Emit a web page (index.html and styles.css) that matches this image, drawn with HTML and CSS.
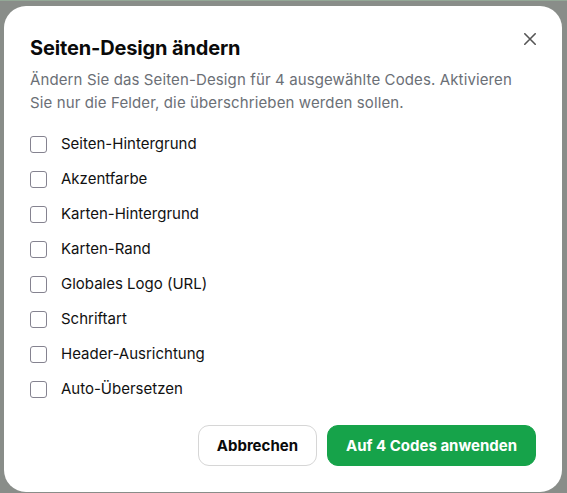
FILE: index.html
```html
<!DOCTYPE html>
<html lang="de">
<head>
<meta charset="utf-8">
<title>Seiten-Design ändern</title>
<link rel="stylesheet" href="styles.css">
</head>
<body>
<div class="backdrop">
  <div class="modal">
    <div class="modal-head">
      <h2 class="title">Seiten-Design ändern</h2>
      <button class="close" aria-label="Schließen">
        <svg width="12" height="12" viewBox="0 0 12 12"><path d="M0.8 0.8L11.2 11.2M11.2 0.8L0.8 11.2" stroke="#555" stroke-width="1.6" stroke-linecap="round"/></svg>
      </button>
    </div>
    <p class="desc">Ändern Sie das Seiten-Design für 4 ausgewählte Codes. Aktivieren Sie nur die Felder, die überschrieben werden sollen.</p>
    <ul class="fields">
      <li><label class="field"><span class="box"></span>Seiten-Hintergrund</label></li>
      <li><label class="field"><span class="box"></span>Akzentfarbe</label></li>
      <li><label class="field"><span class="box"></span>Karten-Hintergrund</label></li>
      <li><label class="field"><span class="box"></span>Karten-Rand</label></li>
      <li><label class="field"><span class="box"></span>Globales Logo (URL)</label></li>
      <li><label class="field"><span class="box"></span>Schriftart</label></li>
      <li><label class="field"><span class="box"></span>Header-Ausrichtung</label></li>
      <li><label class="field"><span class="box"></span>Auto-Übersetzen</label></li>
    </ul>
    <div class="actions">
      <button class="btn btn-secondary">Abbrechen</button>
      <button class="btn btn-primary">Auf 4 Codes anwenden</button>
    </div>
  </div>
</div>
</body>
</html>
```
FILE: styles.css
```css
* { box-sizing: border-box; }
html, body { margin: 0; padding: 0; }
body {
  font-family: Inter, "Noto Sans", sans-serif;
  background: #898d89;
  width: 567px;
  height: 493px;
  overflow: hidden;
}
.backdrop {
  height: 493px;
  padding: 6px 5px 1px 4px;
  border-top: 1px solid #93a896;
}
.modal {
  background: #fff;
  border-radius: 22px;
  height: 486px;
  margin-top: -1px;
  padding: 28px 26px 26px 26px;
  display: flex;
  flex-direction: column;
}
.modal-head {
  display: flex;
  justify-content: space-between;
  align-items: flex-start;
}
.title {
  margin: 0;
  font-size: 20px;
  line-height: 28px;
  font-weight: 700;
  color: #0a0a0a;
  letter-spacing: -0.15px;
}
.close {
  border: 0;
  background: none;
  padding: 0;
  margin-top: -1px;
  width: 12px;
  height: 12px;
  display: flex;
}
.desc {
  margin: 6px 0 0;
  max-width: 492px;
  font-size: 15px;
  line-height: 23px;
  letter-spacing: 0.12px;
  color: #6b6f76;
}
.fields {
  list-style: none;
  margin: 20px 0 0;
  padding: 0;
  display: flex;
  flex-direction: column;
  gap: 15px;
}
.field {
  display: flex;
  align-items: center;
  gap: 14px;
  font-size: 15px;
  line-height: 20px;
  color: #111;
}
.box {
  width: 17px;
  height: 17px;
  border: 1.5px solid #858390;
  border-radius: 3px;
  background: #fff;
  flex: none;
}
.actions {
  margin-top: auto;
  display: flex;
  justify-content: flex-end;
  gap: 10px;
}
.btn {
  font-family: Inter, "Noto Sans", sans-serif;
  font-size: 15px;
  font-weight: 700;
  height: 41px;
  border-radius: 11px;
  padding: 0 18px;
}
.btn-secondary {
  background: #fff;
  border: 1px solid #d6d6d6;
  color: #0a0a0a;
}
.btn-primary {
  background: #16a34a;
  border: 1px solid #16a34a;
  color: #fff;
}
```
